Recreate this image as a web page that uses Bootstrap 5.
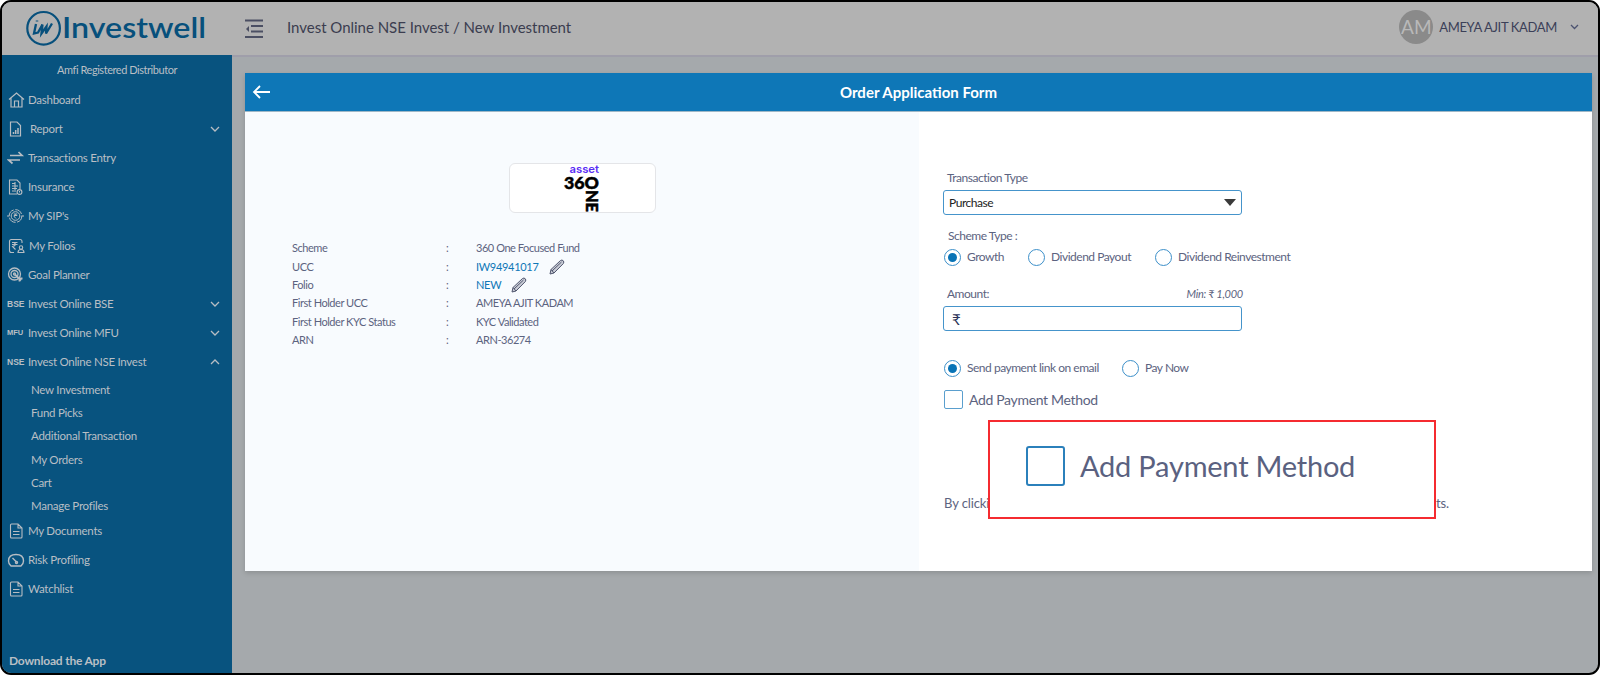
<!DOCTYPE html>
<html lang="en">
<head>
<meta charset="utf-8">
<title>Investwell</title>
<link href="https://cdn.jsdelivr.net/npm/bootstrap@5.3.0/dist/css/bootstrap.min.css" rel="stylesheet">
<style>
body{font-family:Lato,"Noto Sans",sans-serif;background:#fff;font-size:12px;line-height:18px;color:#5c6380}
svg{display:block;flex:none}
.frame{width:1600px;height:675px;border:2px solid #000;border-radius:11px;background:#a5a9ac}
.topbar{height:53px;background:#b2b2b2}
.brand{width:230px}
.burger{margin-left:13px}
.crumb{font-size:15px;color:#3b3d4f;letter-spacing:-.02px;margin-bottom:4px}
.account{padding:0 19px 4px 0}
.avatar{width:34px;height:34px;background:#8a8a8a;color:#b9b9b9;font-size:19px}
.user{font-size:13px;color:#3b4058;letter-spacing:-.35px;padding-left:6px}
.side{width:230px;background:#08537f;color:#b9bfc5;font-size:11.5px;letter-spacing:-.27px}
.side-title{height:30px;padding-top:6px;font-size:11px;letter-spacing:-.45px}
.side .item{height:29.2px;padding-left:5px;padding-right:11px}
.side .ico{width:21px;flex:none}
.side .subitem{height:23.35px;padding-left:29px}
.tag{font:bold 8.500px/10px "Liberation Sans",sans-serif;letter-spacing:0}
.dl{font-size:12px;padding-bottom:3px;letter-spacing:-.2px}
.main-area{border-top:2px solid #9f9eaa;padding:16px 6px 0 13px}
.sheet{height:498px;box-shadow:0 2px 5px rgba(0,0,0,.15)}
.sheet-head{height:39px;background:#0e77b7;color:#fff;font-size:15px;border-bottom:1px solid #9fb7c6}
.lcol{width:674px;background:#f8fbfe}
.amc{width:147px;height:50px;border:1px solid #e4e5e8;border-radius:6px;background:#fff;margin-top:51px}
.facts{margin:26px 0 0 47px;font-size:11px;letter-spacing:-.45px}
.facts>div{height:18.35px}
.f-key{width:154px}.f-sep{width:30px}
.lnk{color:#0e77b7;letter-spacing:-.3px}
.pencil{margin-left:10px}
.rcol{padding-left:24px;background:#fff;letter-spacing:-.48px}
.lbl{height:18px;padding-left:4px}
.field{width:299px;height:25px;border:1px solid #4594cb;border-radius:3px;color:#222;padding:0 5px}
.opt{height:18px;padding-left:1px}
.opt .cap{padding-left:6px}
.dot{width:17px;height:17px;border:1px solid #3c8fc9;border-radius:50%;flex:none}
.dot.on::after{content:"";width:9px;height:9px;border-radius:50%;background:#0873b6}
.box{width:19px;height:19px;border:1px solid #5a9fce;border-radius:2px}
.min-note{font-size:11px;letter-spacing:-.25px}
.add-pay{margin-top:13px;font-size:14px;letter-spacing:-.33px;padding-left:1px}
.consent{margin-top:85px;width:506px;font-size:13px;letter-spacing:-.1px;padding-left:1px}
.callout{left:69px;top:308px;width:448px;height:99px;background:#fff;border:2px solid #f52b30;color:#5a6180;padding:0 0 7px 36px;font-size:29px;letter-spacing:-.22px}
.box-lg{width:39px;height:40px;border:2px solid #2b80bb;border-radius:3px}
.callout .cap{padding-left:15px}
</style>
<script src="https://cdn.jsdelivr.net/npm/bootstrap@5.3.0/dist/js/bootstrap.bundle.min.js"></script>
</head>
<body>
<div class="frame overflow-hidden d-flex flex-column">
  <header class="topbar d-flex align-items-center">
    <div class="brand">
      <svg width="230" height="53" viewBox="2 2 230 53" fill="none" stroke="#07507c">
        <circle cx="43.600" cy="28.300" r="16.300" stroke-width="2.200"/>
        <path d="M36 24l-2 9.500 4-1 4.500-8-1 9 5-7-.5 7 6-10" stroke-width="2.300"/><path d="M37 20.500v1" stroke-width="2.500"/>
        <text x="62" y="38.300" font-size="29" font-weight="600" textLength="144" lengthAdjust="spacingAndGlyphs" fill="#07507c" stroke="none">Investwell</text>
      </svg>
    </div>
    <svg class="burger" width="18" height="20" viewBox="0 0 18 20" stroke="#4b4f63" stroke-width="1.800"><path d="M0 1.500h18M6 7h12M6 12.500h12M0 18h18"/><path d="M4 7v6L1 10z" fill="#4b4f63" stroke="none"/></svg>
    <span class="crumb ps-4">Invest Online NSE Invest / New Investment</span>
    <div class="account d-flex align-items-center ms-auto">
      <div class="avatar rounded-circle d-flex align-items-center justify-content-center">AM</div>
      <span class="user">AMEYA AJIT KADAM</span>
      <svg style="margin-left:13px" width="9" height="6" fill="none" stroke="#4b5270"><path d="M1 1l3.500 3.500L8 1" stroke-width="1.300"/></svg>
    </div>
  </header>
  <div class="d-flex flex-grow-1">
    <aside class="side d-flex flex-column">
      <div class="text-center side-title">Amfi Registered Distributor</div>
      <div class="item d-flex align-items-center"><span class="ico"><svg width="18" height="18" viewBox="0 0 18 18" fill="none" stroke="#b7bdc3" stroke-width="1.200"><path d="M2 8.500L9.500 2l7.500 6.500M4 7v9h11V7M7.500 16v-6h4v6"/></svg></span>Dashboard</div>
      <div class="item d-flex align-items-center"><span class="ico"><svg width="18" height="18" viewBox="0 0 18 18" fill="none" stroke="#b7bdc3" stroke-width="1.200"><path d="M3.500 2H10l3.500 3.500V16h-10z"/><path d="M6.500 14v-2M8.700 14v-4M11 14V8" stroke-width="1.500"/></svg></span><span class="ps-1" style="margin-left:-2px">Report</span><svg class="ms-auto" width="12" height="8" fill="none" stroke="#b7bdc3" stroke-width="1.300"><path d="M2 2l4 4 4-4"/></svg></div>
      <div class="item d-flex align-items-center"><span class="ico"><svg width="18" height="18" viewBox="0 0 18 18" fill="none" stroke="#b7bdc3" stroke-width="1.700"><path d="M3 6.500h12L11.500 3M13 11H1.500L5.500 14.500"/></svg></span>Transactions Entry</div>
      <div class="item d-flex align-items-center"><span class="ico"><svg width="18" height="18" viewBox="0 0 18 18" fill="none" stroke="#b7bdc3" stroke-width="1.100"><path d="M10 16H2.500V2H10l3 3v6M5 5.500h2.500M5 8h6M5 10.500h5M5 13h4M8 4v8"/><circle cx="12.500" cy="14" r="2.400"/><path d="M12.500 13v1.500"/></svg></span>Insurance</div>
      <div class="item d-flex align-items-center"><span class="ico"><svg width="18" height="18" viewBox="0 0 18 18" fill="none" stroke="#b7bdc3"><circle cx="8.500" cy="9" r="6.300" stroke-dasharray="8 1.500"/><circle cx="8.500" cy="9" r="4.300"/><path d="M6.800 7h3.500M6.800 8.500h3.500M8 7q2 1.500-1 2.500l2 2M1 8v2M16 8v2"/></svg></span>My SIP's</div>
      <div class="item d-flex align-items-center"><span class="ico"><svg width="18" height="18" viewBox="0 0 18 18" fill="none" stroke="#b7bdc3" stroke-width="1.100"><path d="M7 15.500H4.500q-2 0-2-2v-9q0-2 2-2H13q2 0 2 2V6M5 5.500h5.500M5 7.500h5.500M7 5.500q3.500 2.500-1.500 4l3 3"/><circle cx="14" cy="10.500" r="1.700"/><path d="M11 15.500q0-3 3-3t3 3z"/></svg></span><span style="padding-left:1px">My Folios</span></div>
      <div class="item d-flex align-items-center"><span class="ico"><svg width="18" height="18" viewBox="0 0 18 18" fill="none" stroke="#b7bdc3" stroke-width="1.300"><circle cx="7.500" cy="8" r="6"/><circle cx="7.500" cy="8" r="3.500"/><circle cx="7.500" cy="8" r="1" /><path d="M8 8.500l6 6M12.500 15.500v-3h3" stroke-width="1.800"/></svg></span>Goal Planner</div>
      <div class="item d-flex align-items-center"><span class="ico tag">BSE</span>Invest Online BSE<svg class="ms-auto" width="12" height="8" fill="none" stroke="#b7bdc3" stroke-width="1.300"><path d="M2 2l4 4 4-4"/></svg></div>
      <div class="item d-flex align-items-center"><span class="ico tag" style="font-size:7.500px">MFU</span>Invest Online MFU<svg class="ms-auto" width="12" height="8" fill="none" stroke="#b7bdc3" stroke-width="1.300"><path d="M2 2l4 4 4-4"/></svg></div>
      <div class="item d-flex align-items-center"><span class="ico tag">NSE</span>Invest Online NSE Invest<svg class="ms-auto" width="12" height="8" fill="none" stroke="#b7bdc3" stroke-width="1.300"><path d="M2 6l4-4 4 4"/></svg></div>
      <div style="padding-top:1px;margin-bottom:-1.500px">
        <div class="subitem d-flex align-items-center">New Investment</div>
        <div class="subitem d-flex align-items-center">Fund Picks</div>
        <div class="subitem d-flex align-items-center">Additional Transaction</div>
        <div class="subitem d-flex align-items-center">My Orders</div>
        <div class="subitem d-flex align-items-center">Cart</div>
        <div class="subitem d-flex align-items-center">Manage Profiles</div>
      </div>
      <div class="item d-flex align-items-center"><span class="ico"><svg width="18" height="18" viewBox="0 0 18 18" fill="none" stroke="#b7bdc3" stroke-width="1.100"><path d="M4.500 2H11l4 4v9q0 1-1 1H4.500q-1 0-1-1V3q0-1 1-1zM11 2v4h4M6 9.500h6.500M6 12.500h6.500"/></svg></span>My Documents</div>
      <div class="item d-flex align-items-center"><span class="ico"><svg width="18" height="18" viewBox="0 0 18 18" fill="none" stroke="#b7bdc3" stroke-width="1.400"><path d="M4 15q-2.500-2-2.500-5 0-6.500 7.500-6.500T16.500 10q0 3-2.500 5zM9.500 11L5.500 7"/><circle cx="9.500" cy="11.500" r="1"/></svg></span>Risk Profiling</div>
      <div class="item d-flex align-items-center"><span class="ico"><svg width="18" height="18" viewBox="0 0 18 18" fill="none" stroke="#b7bdc3" stroke-width="1.100"><path d="M4.500 2H11l4 4v9q0 1-1 1H4.500q-1 0-1-1V3q0-1 1-1zM11 2v4h4M6 9.500h6.500M6 12.500h6.500"/></svg></span>Watchlist</div>
      <div class="dl fw-bold mt-auto" style="padding-left:7px">Download the App</div>
    </aside>
    <main class="main-area flex-grow-1">
      <section class="sheet d-flex flex-column">
        <div class="sheet-head d-flex align-items-center">
          <svg style="margin-left:7px" width="19" height="14" fill="none" stroke="#fff" stroke-width="1.800"><path d="M18 7H2M8 1L2 7l6 6"/></svg>
          <div class="flex-grow-1 text-center fw-bold" style="padding-right:26px">Order Application Form</div>
        </div>
        <div class="d-flex flex-grow-1">
          <div class="lcol">
            <div class="amc mx-auto d-flex justify-content-center">
              <svg class="overflow-visible" width="40" height="48" viewBox="0 0 40 48"><text x="7.500" y="8.500" font-size="11" font-weight="600" fill="#5a2df5" textLength="29.500" lengthAdjust="spacingAndGlyphs" font-family="Inter">asset</text><g font-weight="900" stroke="#000" stroke-width=".5" fill="#000" letter-spacing="0"><text x="2" y="24.500" font-size="17.500" textLength="35" lengthAdjust="spacingAndGlyphs">36O</text><text transform="translate(24 26) rotate(90)" font-size="17.500" textLength="22" lengthAdjust="spacingAndGlyphs">NE</text></g></svg>
            </div>
            <div class="facts">
              <div class="d-flex align-items-center"><span class="f-key">Scheme</span><span class="f-sep">:</span>360 One Focused Fund</div>
              <div class="d-flex align-items-center"><span class="f-key">UCC</span><span class="f-sep">:</span><span class="lnk">IW94941017</span><svg class="pencil" width="16" height="16" viewBox="0 0 16 16" fill="#c9ccd6" stroke="#50566e"><path d="M1 15l1-4.500L11.500 1.500q1.500-1 2.700.2t.2 2.800L5 14zM3 12L12.500 3M2 10.500L5 14"/></svg></div>
              <div class="d-flex align-items-center"><span class="f-key">Folio</span><span class="f-sep">:</span><span class="lnk">NEW</span><svg class="pencil" width="16" height="16" viewBox="0 0 16 16" fill="#c9ccd6" stroke="#50566e"><path d="M1 15l1-4.500L11.500 1.500q1.500-1 2.700.2t.2 2.800L5 14zM3 12L12.500 3M2 10.500L5 14"/></svg></div>
              <div class="d-flex align-items-center"><span class="f-key">First Holder UCC</span><span class="f-sep">:</span>AMEYA AJIT KADAM</div>
              <div class="d-flex align-items-center"><span class="f-key">First Holder KYC Status</span><span class="f-sep">:</span>KYC Validated</div>
              <div class="d-flex align-items-center"><span class="f-key">ARN</span><span class="f-sep">:</span>ARN-36274</div>
            </div>
          </div>
          <div class="rcol flex-grow-1 position-relative">
            <div class="lbl" style="margin-top:57px">Transaction Type</div>
            <div class="field d-flex align-items-center justify-content-between" style="margin-top:3px"><span style="padding-top:1px">Purchase</span><svg width="12" height="8" fill="#3a3a3a"><path d="M0 0h12L6 7z"/></svg></div>
            <div class="lbl" style="margin-top:12px;padding-left:5px">Scheme Type :</div>
            <div class="opt d-flex align-items-center" style="margin-top:3px">
              <span class="dot on d-flex align-items-center justify-content-center"></span><span class="cap" style="width:67px">Growth</span>
              <span class="dot"></span><span class="cap" style="width:110px">Dividend Payout</span>
              <span class="dot"></span><span class="cap">Dividend Reinvestment</span>
            </div>
            <div class="lbl d-flex justify-content-between" style="margin-top:19px;width:300px"><span>Amount:</span><em class="min-note">Min: ₹ 1,000</em></div>
            <div class="field d-flex align-items-center" style="margin-top:3px;padding-left:8px;font-size:15px;color:#2c3358">₹</div>
            <div class="opt d-flex align-items-center" style="margin-top:28px">
              <span class="dot on d-flex align-items-center justify-content-center"></span><span class="cap" style="width:161px">Send payment link on email</span>
              <span class="dot"></span><span class="cap">Pay Now</span>
            </div>
            <div class="add-pay d-flex align-items-center"><span class="box"></span><span style="padding-left:6px">Add Payment Method</span></div>
            <div class="consent d-flex justify-content-between"><span>By clicki</span><span>nts.</span></div>
            <div class="callout position-absolute d-flex align-items-center"><span class="box-lg"></span><span class="cap">Add Payment Method</span></div>
          </div>
        </div>
      </section>
    </main>
  </div>
</div>
</body>
</html>
